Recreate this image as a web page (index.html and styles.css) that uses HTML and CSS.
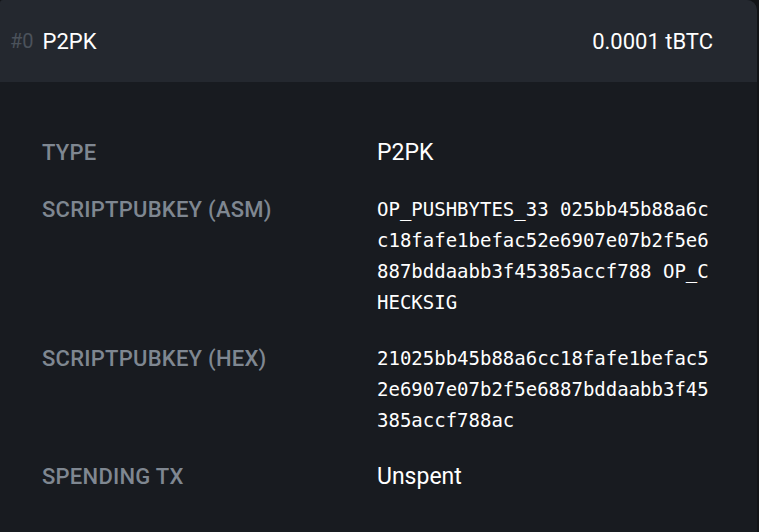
FILE: index.html
```html
<!DOCTYPE html>
<html>
<head>
<meta charset="utf-8">
<link rel="stylesheet" href="styles.css">
</head>
<body>
<div class="card">
  <div class="head">
    <div class="head-left"><span class="idx">#0</span><span class="htype">P2PK</span></div>
    <div class="amount">0.0001 tBTC</div>
  </div>
  <div class="details">
    <div class="row">
      <div class="label">TYPE</div>
      <div class="value">P2PK</div>
    </div>
    <div class="row">
      <div class="label">SCRIPTPUBKEY (ASM)</div>
      <div class="value mono">OP_PUSHBYTES_33 025bb45b88a6cc18fafe1befac52e6907e07b2f5e6887bddaabb3f45385accf788 OP_CHECKSIG</div>
    </div>
    <div class="row">
      <div class="label">SCRIPTPUBKEY (HEX)</div>
      <div class="value mono">21025bb45b88a6cc18fafe1befac52e6907e07b2f5e6887bddaabb3f45385accf788ac</div>
    </div>
    <div class="row">
      <div class="label">SPENDING TX</div>
      <div class="value">Unspent</div>
    </div>
  </div>
</div>
</body>
</html>
```
FILE: styles.css
```css
html, body {
  margin: 0;
  padding: 0;
  background: #121417;
  height: 100%;
  overflow: hidden;
}
.card {
  width: 757px;
  height: 100%;
  background: #181b20;
  border-radius: 3px 10px 0 0;
  overflow: hidden;
  font-family: Roboto, "Liberation Sans", sans-serif;
}
.head {
  height: 82px;
  background: #24282f;
  display: flex;
  align-items: center;
  justify-content: space-between;
  padding: 0 44px 0 10px;
  font-size: 22px;
  color: #ffffff;
}
.head-left {
  display: flex;
  align-items: center;
}
.idx {
  color: #4b525b;
  font-size: 20px;
  margin-right: 9px;
}
.details {
  padding: 42px 0 0 42px;
}
.row {
  display: grid;
  grid-template-columns: 335px 1fr;
  padding: 12px 0;
  align-items: start;
}
.label {
  color: #7f8791;
  font-size: 22px;
  font-weight: 500;
  letter-spacing: 0.25px;
  line-height: 33px;
}
.value {
  color: #ffffff;
  font-size: 23px;
  line-height: 33px;
}
.value.mono {
  font-family: "DejaVu Sans Mono", "Liberation Mono", monospace;
  font-size: 19px;
  line-height: 31px;
  width: 29ch;
  word-break: break-all;
  padding-top: 1px;
}
```
